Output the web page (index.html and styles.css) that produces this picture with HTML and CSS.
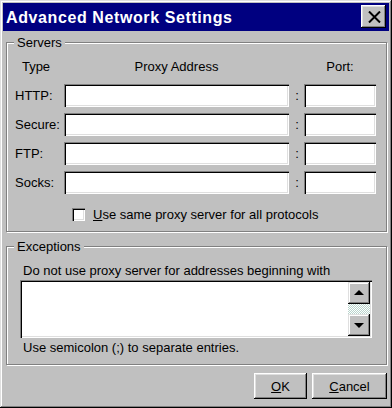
FILE: index.html
```html
<!DOCTYPE html>
<html lang="en">
<head>
  <meta charset="UTF-8">
  <title>Advanced Network Settings</title>
  <link rel="stylesheet" href="styles.css">
</head>
<body>
  <div class="window">
    <div class="titlebar">
      <span class="title">Advanced Network Settings</span>
      <button class="close" type="button">
        <svg width="13" height="12" viewBox="0 0 13 12"><path d="M1 0.5 L12 11.5 M12 0.5 L1 11.5" stroke="#000" stroke-width="2"/></svg>
      </button>
    </div>

    <div class="group servers">
      <span class="group-title">Servers</span>
      <div class="proxy-grid">
        <div class="head type">Type</div>
        <div class="head">Proxy Address</div>
        <div class="head"></div>
        <div class="head">Port:</div>

        <label>HTTP:</label>
        <input class="field" type="text">
        <span class="colon">:</span>
        <input class="field" type="text">

        <label>Secure:</label>
        <input class="field" type="text">
        <span class="colon">:</span>
        <input class="field" type="text">

        <label>FTP:</label>
        <input class="field" type="text">
        <span class="colon">:</span>
        <input class="field" type="text">

        <label>Socks:</label>
        <input class="field" type="text">
        <span class="colon">:</span>
        <input class="field" type="text">
      </div>
      <div class="check-row">
        <span class="checkbox"></span>
        <span><u>U</u>se same proxy server for all protocols</span>
      </div>
    </div>

    <div class="group exceptions">
      <span class="group-title">Exceptions</span>
      <div class="note">Do not use proxy server for addresses beginning with</div>
      <div class="textbox">
        <div class="text-area"></div>
        <div class="scrollbar">
          <div class="arrow-btn"><span class="tri up"></span></div>
          <div class="track"></div>
          <div class="arrow-btn"><span class="tri down"></span></div>
        </div>
      </div>
      <div class="note">Use semicolon (;) to separate entries.</div>
    </div>

    <div class="buttons">
      <button class="btn ok" type="button"><u>O</u>K</button>
      <button class="btn cancel" type="button"><u>C</u>ancel</button>
    </div>
  </div>
</body>
</html>
```

FILE: styles.css
```css
* {
  box-sizing: border-box;
}
body {
  margin: 0;
  font-family: 'Liberation Sans', Arial, sans-serif;
  font-size: 13px;
  line-height: 15px;
  color: #000;
  background: #c0c0c0;
}
.window {
  width: 392px;
  height: 408px;
  padding: 3px;
  background: #c0c0c0;
  box-shadow: inset -1px -1px #000, inset 1px 1px #dfdfdf,
              inset -2px -2px #808080, inset 2px 2px #fff;
  display: flex;
  flex-direction: column;
}
.titlebar {
  height: 28px;
  background: #000080;
  color: #fff;
  display: flex;
  align-items: center;
  justify-content: space-between;
  padding: 0 3px 0 3px;
}
.title {
  font-weight: bold;
  font-size: 16px;
  line-height: 18px;
  letter-spacing: 0.6px;
  padding-top: 1px;
}
.close {
  width: 25px;
  height: 23px;
  padding: 0;
  border: none;
  background: #c0c0c0;
  box-shadow: inset -1px -1px #000, inset 1px 1px #fff,
              inset -2px -2px #808080, inset 2px 2px #dfdfdf;
  display: flex;
  align-items: center;
  justify-content: center;
  margin-top: -1px;
}
.close svg {
  display: block;
  margin-left: 1px;
}

/* group boxes */
.group {
  position: relative;
  margin: 0 3px;
  border: 1px solid #808080;
  box-shadow: 1px 1px 0 #fff, inset 1px 1px 0 #fff;
  padding: 16px 8px 10px 8px;
}
.group-title {
  position: absolute;
  top: -8px;
  left: 7px;
  padding: 0 3px;
  background: #c0c0c0;
}
.servers {
  margin-top: 11px;
  width: 381px;
}
.exceptions {
  margin-top: 14px;
  width: 381px;
  padding: 16px 8px 9px 13px;
}

.proxy-grid {
  display: grid;
  grid-template-columns: 49px 225px 15px 72px;
  row-gap: 6px;
  align-items: center;
}
.head {
  text-align: center;
  margin-bottom: 4px;
}
.head.type {
  padding-right: 7px;
}
.colon {
  text-align: center;
  padding-left: 1px;
}
.field {
  display: block;
  width: 100%;
  height: 23px;
  margin: 0;
  border: none;
  background: #fff;
  box-shadow: inset 1px 1px #808080, inset 2px 2px #000,
              inset -1px -1px #fff, inset -2px -2px #dfdfdf;
}

.check-row {
  display: flex;
  align-items: center;
  gap: 8px;
  margin: 14px 0 0 57px;
  height: 13px;
}
.checkbox {
  width: 13px;
  height: 13px;
  background: #fff;
  box-shadow: inset 1px 1px #808080, inset 2px 2px #000,
              inset -1px -1px #fff, inset -2px -2px #dfdfdf;
}

.note {
  padding-left: 3px;
}
.textbox {
  width: 352px;
  height: 58px;
  margin: 2px 0;
  padding: 2px;
  background: #fff;
  box-shadow: inset 1px 1px #808080, inset 2px 2px #000,
              inset -1px -1px #fff, inset -2px -2px #dfdfdf;
  display: flex;
}
.text-area {
  flex: 1;
}
.scrollbar {
  width: 22px;
  display: flex;
  flex-direction: column;
}
.arrow-btn {
  height: 22px;
  background: #c0c0c0;
  box-shadow: inset -1px -1px #000, inset 1px 1px #dfdfdf,
              inset -2px -2px #808080, inset 2px 2px #fff;
  display: flex;
  align-items: center;
  justify-content: center;
}
.track {
  flex: 1;
  background-color: #fff;
  background-image: repeating-conic-gradient(#b8d4cc 0 25%, #fff 0 50%);
  background-size: 2px 2px;
}
.tri {
  width: 0;
  height: 0;
  border-left: 5px solid transparent;
  border-right: 5px solid transparent;
}
.tri.up {
  border-bottom: 5px solid #000;
  margin-top: -1px;
}
.tri.down {
  border-top: 5px solid #000;
  margin-top: 1px;
}

.buttons {
  display: flex;
  justify-content: flex-end;
  gap: 5px;
  margin: 8px 2px 0 0;
}
.btn {
  height: 26px;
  padding: 0;
  border: none;
  font: inherit;
  color: #000;
  background: #c0c0c0;
  box-shadow: inset -1px -1px #000, inset 1px 1px #fff,
              inset -2px -2px #808080, inset 2px 2px #dfdfdf;
}
.ok {
  width: 53px;
}
.cancel {
  width: 75px;
}
```
